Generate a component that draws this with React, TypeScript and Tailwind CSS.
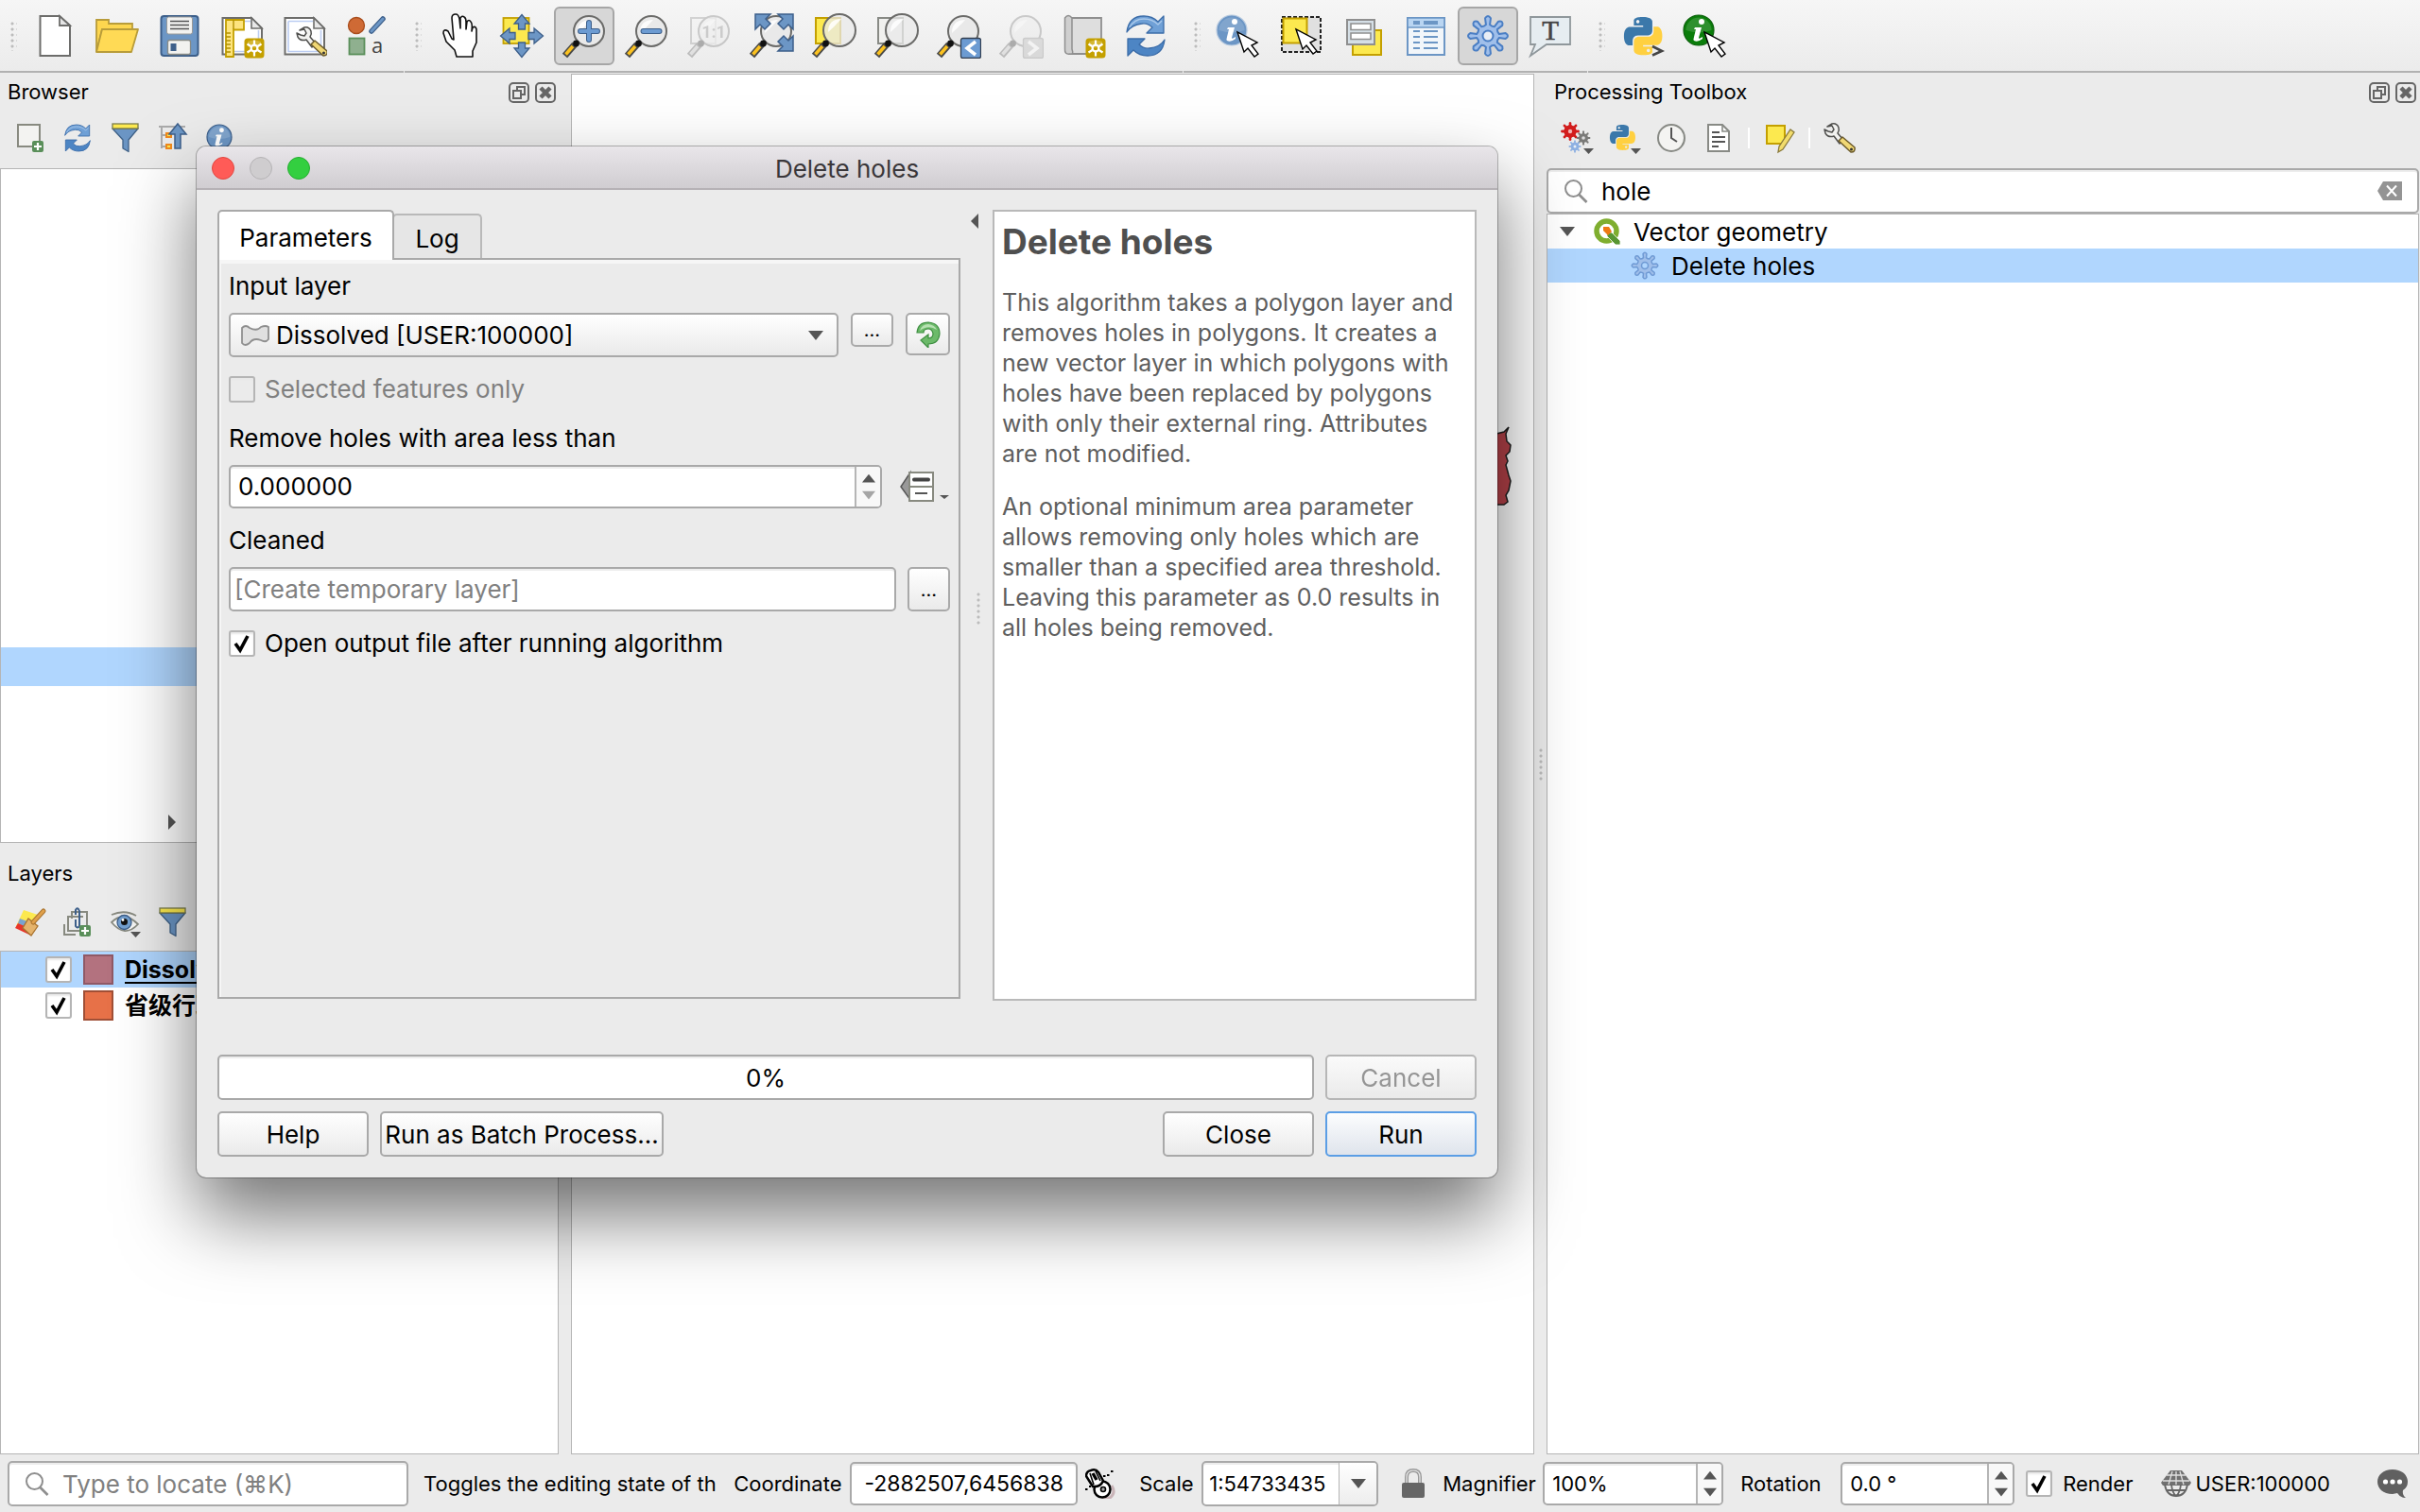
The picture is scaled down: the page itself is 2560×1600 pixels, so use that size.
import { useState } from 'react';
import type { ReactNode } from 'react';
import clsx from 'clsx';

/* ---------- shared drawing helpers ---------- */

const gearPath = (cx: number, cy: number, outer: number, inner: number, teeth = 8) => {
    const step = (Math.PI * 2) / teeth;
    const at = (r: number, a: number) => `${(cx + r * Math.sin(a)).toFixed(2)} ${(cy - r * Math.cos(a)).toFixed(2)}`;
    let d = '';
    for (let i = 0; i < teeth; i++) {
        const a = i * step;
        d += `${i ? 'L' : 'M'}${at(inner, a - step * 0.22)}`;
        d += `L${at(outer * 0.86, a - step * 0.2)}Q${at(outer * 1.06, a)} ${at(outer * 0.86, a + step * 0.2)}`;
        d += `L${at(inner, a + step * 0.22)}Q${at(inner * 0.88, a + step * 0.5)} ${at(inner, a + step * 0.78)}`;
    }
    return `${d}Z`;
};

const Svg48 = ({ children }: { children: ReactNode }) => (
    <svg viewBox="0 0 48 48" className="size-12" fill="none" aria-hidden="true">{children}</svg>
);

const Svg32 = ({ children }: { children: ReactNode }) => (
    <svg viewBox="0 0 32 32" className="size-8 overflow-visible" fill="none" aria-hidden="true">{children}</svg>
);

const Lens = ({ cx = 29, cy = 19, r = 16, clear = false }) => (
    <>
        <circle cx={cx} cy={cy} r={r} fill="#e9e9e9" fillOpacity={clear ? 0.75 : 1} stroke="#6b6b69" strokeWidth="2" />
        <path d={`M${cx - 12} ${cy + 2}Q${cx - 12} ${cy - 12} ${cx + 2} ${cy - 12}Q${cx - 5} ${cy - 4} ${cx - 12} ${cy + 2}Z`} fill="#fff" opacity="0.85" />
        <path d="M14 33 3.500 45" stroke="#4a4a48" strokeWidth="7" />
        <path d="M12 35 4.500 43.500" stroke="#fcc21f" strokeWidth="3.500" />
        <circle cx="15.500" cy="32" r="3.400" fill="#111" />
    </>
);

const Cursor = ({ x, y }: { x: number; y: number }) => (
    <path transform={`translate(${x} ${y})`} d="M0 0 7 21 11 17 18 26 22 23 15 14 21 11Z" fill="#fff" stroke="#000" strokeWidth="1.400" />
);

const GoldBadge = () => (
    <>
        <rect x="26.500" y="26.500" width="21" height="21" rx="3.500" fill="#c4a000" />
        <path d="M30 30Q37 27 44 30V35Q37 38 30 35Z" fill="#dcc14a" opacity="0.7" />
        <circle cx="37" cy="37" r="3.400" stroke="#fff" strokeWidth="2.200" />
        <path d="M37 28.500V33M37 41v4.500M29.500 32.500l4 2.500M40.500 39l4 2.500M29.500 41.500l4-2.500M40.500 35l4-2.500" stroke="#fff" strokeWidth="2.200" />
    </>
);

const Info = ({ cx, cy, r, fill, edge }: { cx: number; cy: number; r: number; fill: string; edge: string }) => (
    <>
        <circle cx={cx} cy={cy} r={r} fill={fill} stroke={edge} strokeWidth="1.200" />
        <path d={`M${cx - r * 0.85} ${cy}A${r * 0.85} ${r * 0.85} 0 0 1 ${cx + r * 0.85} ${cy}Q${cx} ${cy + r * 0.3} ${cx - r * 0.85} ${cy}Z`} fill="#fff" opacity="0.15" />
        <g transform={`translate(${cx} ${cy}) scale(${r / 16})`}>
            <circle cx="3" cy="-9" r="3" fill="#fff" />
            <path d="M-4-3H3L0 8Q0 10 4 7V9Q-1 13-5 11-6 10-5 7L-3-1H-5Z" fill="#fff" />
        </g>
    </>
);

const PY = 'M14.25.18l.9.2.73.26.59.3.45.32.34.34.25.34.16.33.1.3.04.26.02.2-.01.13V8.500l-.05.63-.13.55-.21.46-.26.38-.3.31-.33.25-.35.19-.35.14-.33.1-.3.07-.26.04-.21.02H8.770l-.69.05-.59.14-.5.22-.41.27-.33.32-.27.35-.2.36-.15.37-.1.35-.07.32-.04.27-.02.21v3.060H3.170l-.21-.03-.28-.07-.32-.12-.35-.18-.36-.26-.36-.36-.35-.46-.32-.59-.28-.73-.21-.88-.14-1.050-.05-1.230.06-1.220.16-1.040.24-.87.32-.71.36-.57.4-.44.42-.33.42-.24.4-.16.36-.1.32-.05.24-.01h.16l.06.01h8.160v-.83H6.180l-.01-2.750-.02-.37.05-.34.11-.31.17-.28.25-.26.31-.23.38-.2.44-.18.51-.15.58-.12.64-.1.71-.06.77-.04.84-.02 1.270.05zm-6.300 1.980l-.23.33-.08.41.08.41.23.34.33.22.41.09.41-.09.33-.22.23-.34.08-.41-.08-.41-.23-.33-.33-.22-.41-.09-.41.09z';

const Snake = ({ transform }: { transform: string }) => (
    <g transform={transform}>
        <path d={PY} fill="#3b78aa" />
        <path d={PY} fill="#ffd040" transform="rotate(180 12 12)" />
    </g>
);

const Wrench = ({ transform }: { transform?: string }) => (
    <g transform={transform}>
        <path d="M3 4 8 1Q13 0 15 5 16 8 14 11L20 18 16 22 10 14Q4 16 1 11L0 7 4 9 8 10 10 7 8 3Z" fill="#f2f2f0" stroke="#50504e" strokeWidth="1.500" strokeLinejoin="round" />
        <path d="M15 19 19 15 32 26Q33 31 28 31Z" fill="#f0d774" stroke="#6b5a2a" strokeWidth="1.500" strokeLinejoin="round" />
        <circle cx="28.500" cy="28" r="1.500" fill="#333" />
    </g>
);

const SYNC = 'M4 20Q6 3 22 3 31 3 37 9L43 3V21H25L31 15Q26 10 20 11 9 12 4 20Z';

const Sync = ({ transform }: { transform?: string }) => (
    <g transform={transform} stroke="#3b6ca8" strokeWidth="1.300" strokeLinejoin="round">
        <path d={SYNC} fill="#6fa0d6" />
        <path d="M7 15Q12 6 22 6 31 6 37 12L41 8" stroke="#a9c8ea" />
        <path d={SYNC} transform="rotate(180 24 24)" fill="#4d85c4" />
    </g>
);

const Page = ({ children }: { children?: ReactNode }) => (
    <>
        <path d="M3.500 5H34L45 16V43.500H3.500Z" fill="#fff" stroke="#6d6d6b" strokeWidth="2" />
        <path d="M7 8.500H33M7 8.500V40.500H41.500V18" stroke="#bccdf2" strokeWidth="1.600" />
        <path d="M34 5V16H45Z" fill="#e8e8e8" stroke="#6d6d6b" strokeWidth="1.600" />
        {children}
    </>
);

const Funnel = () => (
    <Svg32>
        <path d="M3 6H30L20 18V30.500L14 27V18Z" fill="#6b95c4" stroke="#3f6187" strokeWidth="1.300" strokeLinejoin="round" />
        <rect x="3" y="1" width="27" height="5" fill="#fce94f" stroke="#7b7d4a" strokeWidth="1.300" />
    </Svg32>
);

const Glass = ({ className }: { className?: string }) => (
    <svg viewBox="0 0 26 26" className={clsx('size-[26px] shrink-0', className)} fill="none" aria-hidden="true">
        <circle cx="10.500" cy="10.500" r="8.500" stroke="#8e8e8e" strokeWidth="2" />
        <path d="M16.500 17 24.500 25" stroke="#8e8e8e" strokeWidth="2.600" />
    </svg>
);

const Tri = ({ dir, className }: { dir: 'up' | 'down' | 'left' | 'right'; className?: string }) => {
    const d = { up: 'M8 3 16 13H0Z', down: 'M0 3H16L8 13Z', left: 'M12 0V16L4 8Z', right: 'M4 0V16L12 8Z' }[dir];
    return <svg viewBox="0 0 16 16" className={clsx('size-4 shrink-0 fill-[#555]', className)} aria-hidden="true"><path d={d} /></svg>;
};

/* ---------- main toolbar ---------- */

type Tool = { name: string; icon: ReactNode; on?: boolean; disabled?: boolean };

const fileTools: Tool[] = [
    { name: 'New project', icon: <Svg48><path d="M8.500 3H29L40 13V45H8.500Z" fill="#fff" stroke="#6d6d6b" strokeWidth="2" /><path d="M29 3V13H40Z" fill="#e6e6e6" stroke="#6d6d6b" strokeWidth="1.800" /></Svg48> },
    { name: 'Open project', icon: <Svg48><path d="M2 41V7H15V11H40V17H8Z" fill="#fdd64f" stroke="#b89c3a" strokeWidth="1.800" /><path d="M8 17H46L39 41H2Z" fill="#ffda55" stroke="#b89c3a" strokeWidth="1.800" strokeLinejoin="round" /></Svg48> },
    {
        name: 'Save project',
        icon: (
            <Svg48>
                <rect x="4.500" y="3" width="39" height="42" rx="3" fill="#6c96c5" stroke="#3d5f8a" strokeWidth="2" />
                <rect x="10.500" y="4" width="27" height="18" rx="2" fill="#f2f2f0" stroke="#9a9a98" />
                <path d="M14 8.500H34M14 12.500H34M14 16.500H34" stroke="#555" strokeWidth="1.500" />
                <rect x="11.500" y="28.500" width="24" height="15" rx="2" fill="#f2f2f0" stroke="#888a85" strokeWidth="1.300" />
                <rect x="14.500" y="32" width="6" height="8" fill="#3d5f8a" />
            </Svg48>
        ),
    },
    {
        name: 'New print layout',
        icon: (
            <Svg48>
                <Page />
                <path d="M7 7H26V17.500H15V46H7Z" fill="#fde47e" stroke="#c4a000" strokeWidth="1.800" />
                <path d="M15 7V17M7 21h5M7 25h5M7 29h5M7 33h5M7 37h5M7 41h5" stroke="#b08f00" strokeWidth="1.400" />
                <GoldBadge />
            </Svg48>
        ),
    },
    { name: 'Layout manager', icon: <Svg48><Page><Wrench transform="translate(16 14)" /></Page></Svg48> },
    {
        name: 'Style manager',
        icon: (
            <Svg48>
                <circle cx="13" cy="13" r="8.500" fill="#cf6a35" stroke="#a84c1c" strokeWidth="1.300" />
                <path d="M29 19 41 6" stroke="#3d5f8a" strokeWidth="5.500" strokeLinecap="round" />
                <path d="M29 19 41 6" stroke="#6c96c5" strokeWidth="3" strokeLinecap="round" />
                <rect x="5.500" y="26.500" width="16" height="17" fill="#8fb08f" stroke="#5a8f5a" strokeWidth="1.800" />
                <text x="29" y="42" fontSize="22" fontFamily="Open Sans" fill="#444">a</text>
            </Svg48>
        ),
    },
];

const navTools: Tool[] = [
    { name: 'Pan map', icon: <Svg48><path d="M21 46 19 39 10 30 7 21Q7 16 12 19L16 27 18 28 16 5Q16 1 20 1 23 1 24 6L25 16 25 5Q27 2 29 4 31 5 31 9L31 17 32 9Q34 6 36 9 38 11 37 19L38 15Q41 13 42 17L42 31 38 40 38 46Z" fill="#fff" stroke="#111" strokeWidth="1.600" strokeLinejoin="round" /></Svg48> },
    {
        name: 'Pan map to selection',
        icon: (
            <Svg48>
                <rect x="4.500" y="5" width="27" height="27" fill="#fce94f" stroke="#c4a000" strokeWidth="1.800" />
                {[0, 90, 180, 270].map((deg) => (
                    <path key={deg} transform={`rotate(${deg} 24 24)`} d="M24 1.500 32 11H27.500V17H20.500V11H16Z" fill="#6c96c5" stroke="#3d5f8a" strokeWidth="1.300" />
                ))}
            </Svg48>
        ),
    },
    { name: 'Zoom in', on: true, icon: <Svg48><Lens /><path d="M29 10V28M20 19H38" stroke="#3d5f8a" strokeWidth="6" strokeLinecap="round" /><path d="M29 10V28M20 19H38" stroke="#6c9bd2" strokeWidth="4" strokeLinecap="round" /></Svg48> },
    { name: 'Zoom out', icon: <Svg48><Lens /><path d="M20.500 19H37.500" stroke="#3d5f8a" strokeWidth="6" strokeLinecap="round" /><path d="M20.500 19H37.500" stroke="#6c9bd2" strokeWidth="4" strokeLinecap="round" /></Svg48> },
    { name: 'Zoom to native resolution', disabled: true, icon: <Svg48><rect x="5" y="5" width="26" height="27" stroke="#888" strokeWidth="2" /><Lens clear /><text x="29" y="26" textAnchor="middle" fontSize="18" fontWeight="700" fontFamily="Roboto" fill="#777">1:1</text></Svg48> },
    {
        name: 'Zoom full',
        icon: (
            <Svg48>
                <Lens />
                {['translate(7 1)', 'translate(47 1) scale(-1 1)', 'translate(47 40) scale(-1 -1)'].map((t) => (
                    <path key={t} transform={t} d="M0 0H16L11 5 16 10 10 16 5 11 0 16Z" fill="#6c96c5" stroke="#3d5f8a" strokeWidth="1.500" />
                ))}
            </Svg48>
        ),
    },
    { name: 'Zoom to selection', icon: <Svg48><rect x="5" y="5" width="26" height="27" fill="#fce94f" stroke="#c4a000" strokeWidth="2" /><Lens cx={30} cy={18} r={17} clear /></Svg48> },
    { name: 'Zoom to layer', icon: <Svg48><rect x="5" y="5" width="26" height="27" fill="#f0f0ee" stroke="#888a85" strokeWidth="2" /><Lens cx={30} cy={18} r={17} clear /></Svg48> },
    { name: 'Zoom last', icon: <Svg48><Lens /><rect x="26.500" y="26.500" width="21" height="21" rx="2" fill="#6c9bd2" stroke="#333f50" strokeWidth="1.300" /><path d="M42 30 33 37 42 44" stroke="#fff" strokeWidth="3.500" /></Svg48> },
    { name: 'Zoom next', disabled: true, icon: <Svg48><Lens /><rect x="26.500" y="26.500" width="21" height="21" rx="2" fill="#a4adb8" stroke="#777" strokeWidth="1.300" /><path d="M32 30 41 37 32 44" stroke="#fff" strokeWidth="3.500" /></Svg48> },
    { name: 'New map view', icon: <Svg48><path d="M12 5H43V43H9V5Z" fill="#dedede" stroke="#8f8f8f" strokeWidth="1.800" /><path d="M4.500 5Q8 0 12 5V38Q14 44 10 43 4 44 4.500 38Z" fill="#cfcfcf" stroke="#8f8f8f" strokeWidth="1.500" /><GoldBadge /></Svg48> },
    { name: 'Refresh', icon: <Svg48><Sync /></Svg48> },
];

const attributeTools: Tool[] = [
    { name: 'Identify features', icon: <Svg48><Info cx={17} cy={18} r={16} fill="#6c96c5" edge="#b9cbe0" /><Cursor x={23} y={20} /></Svg48> },
    { name: 'Select features', icon: <Svg48><rect x="4" y="4" width="41" height="37" fill="#e0e0e0" stroke="#222" strokeWidth="2" strokeDasharray="4 2" /><rect x="5.500" y="5.500" width="25" height="26" fill="#fce94f" stroke="#c4a000" strokeWidth="2" /><Cursor x={19} y={17} /></Svg48> },
    { name: 'Deselect features', icon: <Svg48><rect x="13" y="18" width="30" height="26" fill="#fce94f" stroke="#c4a000" strokeWidth="2" /><rect x="7" y="7" width="29" height="26" fill="#d5dfe6" stroke="#8f8f8f" strokeWidth="2" /><path d="M11 11H32V17.500H11ZM11 21H32V27.500H11Z" fill="#fff" stroke="#8f8f8f" strokeWidth="1.600" /></Svg48> },
    {
        name: 'Open attribute table',
        icon: (
            <Svg48>
                <rect x="5" y="5" width="39" height="39" fill="#f2f6fa" stroke="#6c96c5" strokeWidth="2" />
                <path d="M5 5H44V15H5Z" fill="#b9d5f2" stroke="#6c96c5" strokeWidth="1.600" />
                <path d="M11 10H18M22 10H37" stroke="#6c96c5" strokeWidth="4" />
                <path d="M11 19H18M11 25H18M11 31H18M11 37H18M22 19H37M22 25H37M22 31H37M22 37H37" stroke="#6c96c5" strokeWidth="2" />
            </Svg48>
        ),
    },
    { name: 'Processing toolbox', on: true, icon: <Svg48><path d={gearPath(24, 24, 22, 12)} fill="#a0bfea" stroke="#4a7ec4" strokeWidth="2" strokeLinejoin="round" /><circle cx="24" cy="24" r="5.500" fill="#e8eef6" stroke="#4a7ec4" strokeWidth="2" /></Svg48> },
    { name: 'Text annotation', icon: <Svg48><path d="M3 4H45V33H20L3 45 8 33H3Z" fill="#e6edf1" stroke="#8f979b" strokeWidth="1.800" /><text x="24" y="28" textAnchor="middle" fontSize="29" fontFamily="Liberation Serif" fill="#444" stroke="#444" strokeWidth="0.600">T</text></Svg48> },
];

const pluginTools: Tool[] = [
    { name: 'Python console', icon: <Svg48><Snake transform="translate(4 4) scale(1.680)" /><path d="M34 35 44 40 34 44.500" stroke="#444" strokeWidth="2.600" /></Svg48> },
    { name: 'Identify plugin', icon: <Svg48><Info cx={17} cy={18} r={16} fill="#0a7d0a" edge="#0b5f0b" /><Cursor x={23} y={20} /></Svg48> },
];

function ToolGroup({ tools, grow }: { tools: Tool[]; grow?: boolean }) {
    return (
        <div className={clsx('flex h-[77px] items-center gap-0.5 border-b-2 border-[#b1b1b1] pr-[7px]', grow ? 'flex-1' : 'mr-px')}>
            <Grip className="mr-1.5 ml-2.5 h-8 w-2" />
            {tools.map((tool) => (
                <button
                    key={tool.name}
                    aria-label={tool.name}
                    disabled={tool.disabled}
                    className={clsx(
                        'flex h-[62px] w-16 items-center justify-center rounded-md',
                        tool.on && 'border-2 border-[#a6a6a6] bg-[#d7d7d7]',
                        tool.disabled && 'opacity-30 grayscale',
                    )}
                >
                    {tool.icon}
                </button>
            ))}
        </div>
    );
}

function Grip({ className }: { className?: string }) {
    return (
        <div className={clsx('bg-[radial-gradient(circle,#bcbcbc_1px,transparent_2px)] bg-[length:6px_6px]', className)} />
    );
}

/* ---------- dock widgets ---------- */

const DockButtons = () => (
    <div className="flex gap-1.5">
        <button aria-label="Float panel">
            <svg viewBox="0 0 22 22" className="size-[22px]" fill="none" stroke="#666" strokeWidth="2"><rect x="1" y="1" width="20" height="20" rx="4" /><path d="M9 9V5H17V13H13M5 9H13V17H5Z" /></svg>
        </button>
        <button aria-label="Close panel">
            <svg viewBox="0 0 22 22" className="size-[22px]" fill="none" stroke="#666"><rect x="1" y="1" width="20" height="20" rx="4" strokeWidth="2" /><path d="M6 6 16 16M16 6 6 16" strokeWidth="4.500" /></svg>
        </button>
    </div>
);

function DockHeader({ title, buttons = true }: { title: string; buttons?: boolean }) {
    return (
        <header className="flex h-10 items-center justify-between pr-[3px] pb-px pl-2">
            <h2 className="text-[22px]">{title}</h2>
            {buttons && <DockButtons />}
        </header>
    );
}

const DockTool = ({ name, children }: { name: string; children: ReactNode }) => (
    <button aria-label={name} className="flex h-12 w-[50px] items-center justify-center">{children}</button>
);

const AddBadge = () => (
    <>
        <rect x="18" y="19" width="12" height="12" rx="2" fill="#5a8f5a" />
        <path d="M24 21V29M20 25H28" stroke="#fff" strokeWidth="2.200" />
    </>
);

const MenuMark = () => <path d="M22 26H33L27.500 32Z" fill="#555" />;

const BROWSER_ROWS = Array.from({ length: 17 }, (_, i) => ({ id: i, selected: i === 12, branch: i === 16 }));

function BrowserDock() {
    return (
        <section className="flex min-h-0 flex-[815] flex-col">
            <DockHeader title="Browser" />
            <div className="flex h-[60px] items-center pb-1 pl-[7px]">
                <DockTool name="Add selected layers"><Svg32><rect x="3" y="2" width="23" height="23" fill="#f3f3f1" stroke="#888a80" strokeWidth="2" /><AddBadge /></Svg32></DockTool>
                <DockTool name="Refresh"><Svg32><Sync transform="scale(.667)" /></Svg32></DockTool>
                <DockTool name="Filter browser"><Funnel /></DockTool>
                <DockTool name="Collapse all">
                    <Svg32>
                        <path d="M2 4H30M5 4V27M5 13H10M5 25H10" stroke="#aaa" strokeWidth="2" />
                        <path d="M10 11H15V15H10ZM10 23H15V27H10Z" fill="#fce94f" stroke="#f08a1c" strokeWidth="2" />
                        <path d="M22 1 31 12H25V27H19V12H13Z" fill="#6c96c5" stroke="#3d5f8a" strokeWidth="1.500" />
                    </Svg32>
                </DockTool>
                <DockTool name="Properties"><Svg32><Info cx={16} cy={15} r={13} fill="#6c96c5" edge="#3d5f8a" /></Svg32></DockTool>
            </div>
            <ul className="min-h-0 flex-1 overflow-hidden border border-[#b5b5b5] bg-white pt-3.5">
                {BROWSER_ROWS.map((row) => (
                    <li key={row.id} className={clsx('flex h-[41px] items-center pl-[173px]', row.selected && 'bg-[#b0d6fe]')}>
                        {row.branch && <Tri dir="right" />}
                    </li>
                ))}
            </ul>
        </section>
    );
}

function Check({ id, checked, disabled, onChange }: { id: string; checked: boolean; disabled?: boolean; onChange?: () => void }) {
    return (
        <span className="grid size-7 shrink-0">
            <input
                id={id}
                type="checkbox"
                checked={checked}
                disabled={disabled}
                onChange={onChange ?? (() => undefined)}
                className="col-start-1 row-start-1 size-7 appearance-none rounded-[3px] border-2 border-[#b5b5b5] bg-white shadow-[inset_0_2px_2px_#e8e8e8] disabled:bg-transparent"
            />
            {checked && (
                <svg viewBox="0 0 28 28" className="pointer-events-none col-start-1 row-start-1 size-7" fill="none" aria-hidden="true">
                    <path d="M7 14 12 21 20 6" stroke="#000" strokeWidth="3.600" />
                </svg>
            )}
        </span>
    );
}

const LAYERS = [
    { id: 'dissolved', name: 'Dissolved', swatch: 'bg-[#b3727f] border-[#8f5966]', active: true },
    { id: 'province', name: '省级行政区', swatch: 'bg-[#e77148] border-[#a04f36]', active: false },
];

function LayersDock() {
    const [visible, setVisible] = useState<Record<string, boolean>>({ dissolved: true, province: true });

    return (
        <section className="flex min-h-0 flex-[634] flex-col pt-[13px]">
            <DockHeader title="Layers" buttons={false} />
            <div className="flex h-[61px] items-center pl-[7px]">
                <DockTool name="Open layer styling">
                    <Svg32>
                        <path d="M1 20 9 3 24 8 16 29Z" fill="#fce94f" />
                        <path d="M5 12 3 17 18 25 21 18Z" fill="#7aa3d0" />
                        <path d="M3 17 0 22 17 30 19 24Z" fill="#e8352b" />
                        <path d="M14 12 24 20 17 30 8 22Z" fill="#e5b36b" stroke="#a8722e" strokeWidth="1.300" />
                        <path d="M19 16 30 4" stroke="#a8722e" strokeWidth="5" strokeLinecap="round" />
                        <path d="M19 16 30 4" stroke="#e0a04a" strokeWidth="3" strokeLinecap="round" />
                    </Svg32>
                </DockTool>
                <DockTool name="Add group">
                    <Svg32>
                        <path d="M10 12V5H26V22M6 21V10H22M2 18V29H14M6 21V25H18" stroke="#888a80" strokeWidth="2" />
                        <path d="M14 13V20Q16 23 18 20V4Q16-1 14 3V8" stroke="#3d5f8a" strokeWidth="2" />
                        <AddBadge />
                    </Svg32>
                </DockTool>
                <DockTool name="Manage map themes">
                    <Svg32>
                        <path d="M2 8Q16 2 28 9" stroke="#888a80" strokeWidth="1.800" />
                        <path d="M2 16Q15 3 30 18 16 33 2 16Z" fill="#f6f6f4" stroke="#888a80" strokeWidth="1.800" />
                        <circle cx="15.500" cy="16" r="7.500" fill="#729fcf" stroke="#3d5f8a" strokeWidth="1.300" />
                        <circle cx="15.500" cy="15.500" r="3.500" fill="#111" />
                        <circle cx="14" cy="13.500" r="1.400" fill="#fff" />
                        <MenuMark />
                    </Svg32>
                </DockTool>
                <DockTool name="Filter legend"><Funnel /></DockTool>
            </div>
            <ul className="flex-1 overflow-hidden border border-[#b5b5b5] bg-white text-[25px] font-bold">
                {LAYERS.map((layer) => (
                    <li key={layer.id} className={clsx('flex h-[38px] items-center pl-[47px]', layer.active && 'bg-[#b0d6fe]')}>
                        <Check
                            id={`layer-${layer.id}`}
                            checked={visible[layer.id]}
                            onChange={() => setVisible((v) => ({ ...v, [layer.id]: !v[layer.id] }))}
                        />
                        <span className={clsx('mr-3 ml-3 size-8 border-2', layer.swatch)} />
                        <label htmlFor={`layer-${layer.id}`} className={clsx('whitespace-nowrap', layer.active && 'underline decoration-2 underline-offset-4')}>
                            {layer.name}
                        </label>
                    </li>
                ))}
            </ul>
        </section>
    );
}

const Divider = () => <span className="mx-1.5 h-[22px] w-0.5 bg-white" />;

function ToolboxDock() {
    const [query, setQuery] = useState('hole');

    return (
        <aside className="flex w-[923px] flex-col">
            <DockHeader title="Processing Toolbox" />
            <div className="flex h-[60px] items-center pb-1 pl-[7px]">
                <DockTool name="Models">
                    <Svg32>
                        <path d={gearPath(9, 9, 10.5, 7)} fill="#d21c1c" />
                        <circle cx="9" cy="9" r="2.200" fill="#f4b4b4" />
                        <path d={gearPath(23, 16, 8, 5.2)} fill="#7a7a78" />
                        <circle cx="23" cy="16" r="1.800" fill="#ddd" />
                        <path d={gearPath(14, 25, 7, 4.6)} fill="#8db0e2" />
                        <circle cx="14" cy="25" r="1.500" fill="#e8eef6" />
                        <path d="M23 27H34L28.500 33Z" fill="#555" />
                    </Svg32>
                </DockTool>
                <DockTool name="Scripts"><Svg32><Snake transform="translate(1 2) scale(1.120)" /><path d="M23 27H34L28.500 33Z" fill="#555" /></Svg32></DockTool>
                <DockTool name="History"><Svg32><circle cx="16" cy="16" r="14" fill="#f4f4f2" stroke="#888a85" strokeWidth="2" /><path d="M16 5V16L22 20" stroke="#555" strokeWidth="2" /></Svg32></DockTool>
                <DockTool name="Results viewer"><Svg32><path d="M5 2H20L27 9V30H5Z" fill="#fff" stroke="#888a85" strokeWidth="2" /><path d="M20 2V9H27" stroke="#888a85" strokeWidth="1.600" /><path d="M9 10H17M9 15H23M9 20H23M9 25H16" stroke="#555" strokeWidth="2" /></Svg32></DockTool>
                <Divider />
                <DockTool name="Edit features in place"><Svg32><path d="M3 3H22V22H3Z" fill="#fce94f" stroke="#c4a000" strokeWidth="2" /><path d="M28 7 32 10 20 28 15 31 16 25Z" fill="#f2dc6c" stroke="#8a7a3a" strokeWidth="1.300" /></Svg32></DockTool>
                <Divider />
                <DockTool name="Options"><Svg32><Wrench /></Svg32></DockTool>
            </div>
            <label className="flex h-12 items-center rounded-[5px] border-2 border-[#a9a9a9] bg-white pr-4 pl-4 shadow-[inset_0_2px_0_#ededed]">
                <Glass />
                <input
                    aria-label="Search algorithms"
                    value={query}
                    onChange={(e) => setQuery(e.target.value)}
                    className="ml-3.5 min-w-0 flex-1 outline-none"
                />
                <button aria-label="Clear search" onClick={() => setQuery('')}>
                    <svg viewBox="0 0 26 20" className="h-5 w-[26px]" fill="none"><path d="M6 0H26V20H6L0 10Z" fill="#949494" /><path d="M10 4.500 20 15.500M20 4.500 10 15.500" stroke="#fff" strokeWidth="2" /></svg>
                </button>
            </label>
            <ul className="flex-1 border border-[#b5b5b5] bg-white">
                <li>
                    <div className="flex h-9 items-center pl-[13px]">
                        <Tri dir="down" />
                        <svg viewBox="0 0 28 28" className="mr-3.5 ml-5 size-7" fill="none" aria-hidden="true">
                            <circle cx="13.500" cy="13.500" r="10.500" stroke="#7fae2f" strokeWidth="5.500" />
                            <path d="M14 15H19L28 24V28H23L14 19Z" fill="#589632" stroke="#fff" strokeWidth="0.800" />
                            <path d="M10 9H16L19 14 15 18 10 13Z" fill="#ee7913" />
                        </svg>
                        Vector geometry
                    </div>
                    <ul>
                        <li className="flex h-9 items-center bg-[#b0d6fe] pl-[87px]">
                            <svg viewBox="0 0 32 32" className="mr-3 size-8" aria-hidden="true">
                                <path d={gearPath(16, 16, 14.5, 8.5)} fill="#a0bfea" stroke="#6f9ad4" strokeWidth="1.500" />
                                <circle cx="16" cy="16" r="3.500" fill="#b0d6fe" stroke="#6f9ad4" strokeWidth="1.500" />
                            </svg>
                            Delete holes
                        </li>
                    </ul>
                </li>
            </ul>
        </aside>
    );
}

function MapCanvas() {
    return (
        <main className="relative min-w-0 flex-1 overflow-hidden border border-[#b5b5b5] bg-white">
            <svg viewBox="0 0 60 84" className="absolute top-[372px] right-[23px] h-[84px] w-[60px]" fill="#b8434a" stroke="#1d1d1d" strokeWidth="1.500" aria-label="Dissolved layer">
                <path d="M0 30 44 8 52 6 57 1 54 8 55 16 59 20 58 27 54 31 56 37 54 41 57 52 59 58 57 68 54 73 56 80 52 83 44 83 0 70Z" />
            </svg>
        </main>
    );
}

/* ---------- form parts ---------- */

const fieldBox = 'rounded-[5px] border-2 border-[#a9a9a9] bg-white shadow-[inset_0_2px_0_#ededed]';
const pushButton = 'rounded-[5px] border-2 border-[#a9a9a9] bg-linear-to-b from-white to-[#eaeaea]';

type SpinProps = { label: string; initial: string; className?: string; minimum?: boolean };

function SpinBox({ label, initial, className, minimum }: SpinProps) {
    const [value, setValue] = useState(initial);

    return (
        <div className={clsx('flex overflow-hidden', fieldBox, className)}>
            <input id={label} value={value} onChange={(e) => setValue(e.target.value)} className="w-0 min-w-0 flex-1 bg-transparent pl-2 outline-none" />
            <div className="flex w-[27px] flex-col items-center justify-center gap-1 border-l-2 border-[#b5b5b5] bg-[#f8f8f8]">
                <button aria-label={`Increase ${label}`}><Tri dir="up" className="h-3.5" /></button>
                <button aria-label={`Decrease ${label}`}><Tri dir="down" className={clsx('h-3.5', minimum && 'opacity-50')} /></button>
            </div>
        </div>
    );
}

/* ---------- algorithm dialog ---------- */

function Titlebar() {
    return (
        <div className="grid h-[46px] grid-cols-[1fr_auto_1fr] items-center rounded-t-[10px] border-b-2 border-[#b5b1b5] bg-linear-to-b from-[#e9e6ea] to-[#d0cdd1] px-4 pt-0.5">
            <div className="flex gap-4">
                <button aria-label="Close window" className="size-6 rounded-full border border-[#e2463f] bg-[#ff5b57]" />
                <button aria-label="Minimize window" disabled className="size-6 rounded-full border border-[#b5b3b5] bg-[#cfcdcf]" />
                <button aria-label="Zoom window" className="size-6 rounded-full border border-[#25ad30] bg-[#33cf40]" />
            </div>
            <h1 className="text-[#3a373a]">Delete holes</h1>
        </div>
    );
}

function Parameters() {
    const [open, setOpen] = useState(true);

    return (
        <div className="flex-1 border-2 border-[#a9a9a9] pt-2.5 pr-[9px] pl-2.5 leading-9 shadow-[inset_2px_4px_0_#f6f6f6]">
            <label htmlFor="input-layer" className="block">Input layer</label>
            <div className="mt-2.5 flex gap-[13px]">
                <div className={clsx('grid flex-1 items-center', pushButton)}>
                    <select id="input-layer" className="col-start-1 row-start-1 h-[43px] w-full appearance-none bg-transparent pl-12 outline-none">
                        <option>Dissolved [USER:100000]</option>
                    </select>
                    <div className="pointer-events-none col-start-1 row-start-1 flex items-center justify-between pr-3.5 pl-2.5">
                        <svg viewBox="0 0 32 24" className="h-6 w-8" aria-hidden="true">
                            <path d="M2 4Q6 0 10 4 18 8 22 3 27 1 30 3V16Q27 20 22 17 14 14 10 20 5 24 2 20Z" fill="#e0e0e0" stroke="#8f8f8f" strokeWidth="1.800" />
                        </svg>
                        <Tri dir="down" />
                    </div>
                </div>
                <button aria-label="Choose layer file" className={clsx('h-9 w-[45px] text-xl leading-5', pushButton)}>…</button>
                <button aria-label="Iterate over this layer" className={clsx('flex h-[45px] w-[47px] items-center justify-center', pushButton)}>
                    <svg viewBox="0 0 28 28" className="size-7" fill="none" aria-hidden="true">
                        <path d="M2 12Q3 1 14 1 26 2 26 13 25 24 14 24V28L6 20 14 14V18Q19 18 19 13 18 8 14 8 9 8 9 12Z" fill="#6cba6a" stroke="#3f8f42" strokeWidth="1.200" />
                        <path d="M5 10Q7 3 14 3 21 4 23 9 14 3 5 10Z" fill="#b5e0b0" />
                    </svg>
                </button>
            </div>
            <div className="mt-5 flex items-center gap-2.5 text-[#808080]">
                <Check id="selected-only" checked={false} disabled />
                <label htmlFor="selected-only" className="leading-7">Selected features only</label>
            </div>
            <label htmlFor="Minimum area" className="mt-5 block">Remove holes with area less than</label>
            <div className="mt-2.5 flex items-center">
                <SpinBox label="Minimum area" initial="0.000000" className="h-[46px] flex-1" minimum />
                <button aria-label="Data defined override" className="flex w-[72px] justify-end">
                    <svg viewBox="0 0 54 36" className="h-9 w-[54px]" fill="none" aria-hidden="true">
                        <path d="M12 3 2 18 12 32Z" fill="#999" stroke="#555" strokeWidth="1.500" />
                        <path d="M11 3H36V18H11ZM11 18H36V33H11Z" fill="#fff" stroke="#888a80" strokeWidth="2" />
                        <path d="M16 10.500H31" stroke="#444" strokeWidth="4" strokeLinecap="round" />
                        <path d="M17 25H30" stroke="#555" strokeWidth="2" />
                        <path d="M43 27H53L48 31Z" fill="#555" />
                    </svg>
                </button>
            </div>
            <label htmlFor="cleaned" className="mt-4 block">Cleaned</label>
            <div className="mt-2.5 flex gap-3">
                <input id="cleaned" placeholder="[Create temporary layer]" className={clsx('h-[47px] min-w-0 flex-1 pl-1 outline-none placeholder:text-[#808080]', fieldBox)} />
                <button aria-label="Choose output" className={clsx('w-[45px] text-xl', pushButton)}>…</button>
            </div>
            <div className="mt-5 flex items-center gap-2.5">
                <Check id="open-output" checked={open} onChange={() => setOpen(!open)} />
                <label htmlFor="open-output" className="leading-7">Open output file after running algorithm</label>
            </div>
        </div>
    );
}

function AlgorithmDialog() {
    return (
        <div role="dialog" aria-label="Delete holes" className="absolute top-[155px] left-[208px] w-[1376px] rounded-[10px] bg-[#ebebeb] shadow-[0_0_0_1px_rgba(0,0,0,0.28),0_40px_80px_rgba(0,0,0,0.55)]">
            <Titlebar />
            <div className="px-[22px] pt-[21px] pb-[22px]">
                <div className="flex h-[837px]">
                    <div className="flex w-[786px] flex-col pb-0.5">
                        <div role="tablist" className="-mb-0.5 flex items-end">
                            <button role="tab" aria-selected="true" className="z-10 h-[53px] w-[187px] rounded-t-[5px] border-2 border-b-0 border-[#a9a9a9] bg-white pt-1">Parameters</button>
                            <button role="tab" aria-selected="false" className="mb-0.5 -ml-0.5 h-[47px] w-[95px] rounded-t-[5px] border-2 border-b-0 border-[#b9b9b9] bg-[#e6e6e6] pt-1">Log</button>
                        </div>
                        <Parameters />
                    </div>
                    <div className="flex w-[34px] flex-col items-center">
                        <button aria-label="Collapse help" className="mt-1 mr-1"><Tri dir="left" /></button>
                        <Grip className="mt-96 ml-1 h-9 w-1.5" />
                    </div>
                    <article className="flex-1 border-2 border-[#b9b9b9] bg-white py-3 pr-4 pl-2 text-[25px] leading-8 text-[#5e5e5e]">
                        <h2 className="text-[37px] leading-10 font-bold text-[#4f4f4f]">Delete holes</h2>
                        <p className="mt-7">
                            This algorithm takes a polygon layer and removes holes in polygons. It creates a new vector layer in which polygons
                            with holes have been replaced by polygons with only their external ring. Attributes are not modified.
                        </p>
                        <p className="mt-6">
                            An optional minimum area parameter allows removing only holes which are smaller than a specified area threshold.
                            Leaving this parameter as 0.0 results in all holes being removed.
                        </p>
                    </article>
                </div>
                <div className="mt-[57px] flex gap-3">
                    <div role="progressbar" aria-valuenow={0} className={clsx('flex h-12 flex-1 items-center justify-center', fieldBox)}>0%</div>
                    <button disabled className={clsx('w-40 text-[#808080] opacity-80', pushButton)}>Cancel</button>
                </div>
                <div className="mt-3 flex h-12 gap-3">
                    <button className={clsx('w-40', pushButton)}>Help</button>
                    <button className={clsx('w-[300px] whitespace-nowrap', pushButton)}>Run as Batch Process…</button>
                    <button className={clsx('ml-auto w-40', pushButton)}>Close</button>
                    <button className="w-40 rounded-[5px] border-2 border-[#5b9ee5] bg-linear-to-b from-[#fcfdfe] to-[#dfe4ec]">Run</button>
                </div>
            </div>
        </div>
    );
}

/* ---------- status bar ---------- */

function StatusBar() {
    const [render, setRender] = useState(true);

    return (
        <footer className="flex h-[61px] items-center pt-px pr-3 pl-2 text-[22px]">
            <label className={clsx('flex h-12 w-[424px] shrink-0 items-center pl-4', fieldBox)}>
                <Glass />
                <input aria-label="Locator" placeholder="Type to locate (⌘K)" className="ml-3.5 min-w-0 flex-1 text-[26px] outline-none placeholder:text-[#808080]" />
            </label>
            <p className="mr-3 ml-4 w-0 flex-1 overflow-hidden whitespace-nowrap">Toggles the editing state of th</p>
            <label htmlFor="coordinate" className="w-[123px]">Coordinate</label>
            <input id="coordinate" defaultValue="-2882507,6456838" className={clsx('h-[46px] w-[241px] text-center text-[23px] outline-none', fieldBox)} />
            <button aria-label="Toggle extents" className="mx-2">
                <svg viewBox="0 0 32 32" className="size-8" fill="none" aria-hidden="true">
                    <path d="M28 18Q33 26 26 31 22 32 18 31" stroke="#c9b4b8" strokeWidth="3" />
                    <circle cx="18" cy="22" r="8.500" fill="#fff" stroke="#000" strokeWidth="2.500" />
                    <circle cx="19" cy="22" r="2.500" fill="#aaa" stroke="#000" strokeWidth="1.600" />
                    <path d="M1 8Q1 3 6 2 11 0 14 4L19 13Q16 20 8 19Z" fill="#fff" stroke="#000" strokeWidth="2.500" />
                    <path d="M5 5 9 17M11 3 16 13" stroke="#000" strokeWidth="1.600" />
                    <path d="M8 5 12 12" stroke="#000" strokeWidth="3.400" />
                    <path d="M19 8H21.500M23 7H25.500M27 3H29.500M0 22H2.500M4 19H6" stroke="#000" strokeWidth="2.200" />
                </svg>
            </button>
            <label htmlFor="scale" className="ml-[17px] w-[66px]">Scale</label>
            <div className={clsx('flex h-12 w-[187px] overflow-hidden', fieldBox)}>
                <input id="scale" defaultValue="1:54733435" className="w-0 min-w-0 flex-1 bg-transparent pl-1.5 outline-none" />
                <button aria-label="Scale presets" className="flex w-10 items-center justify-center border-l border-[#b5b5b5] bg-linear-to-b from-white to-[#ededed]"><Tri dir="down" /></button>
            </div>
            <button aria-label="Lock scale" className="mr-4 ml-[22px]">
                <svg viewBox="0 0 30 32" className="h-8 w-[30px]" fill="none" aria-hidden="true"><path d="M8 16V9Q8 2 15 2 22 2 22 9V16" stroke="#999" strokeWidth="4" /><path d="M8 16V9Q8 2 15 2 22 2 22 9V16" stroke="#e9e9e9" strokeWidth="1.200" /><rect x="3" y="15" width="24" height="16" rx="2" fill="#666" /></svg>
            </button>
            <label htmlFor="Magnifier" className="w-[106px]">Magnifier</label>
            <SpinBox label="Magnifier" initial="100%" className="h-[46px] w-[191px]" />
            <label htmlFor="Rotation" className="ml-[18px] w-[106px]">Rotation</label>
            <SpinBox label="Rotation" initial="0.0 °" className="h-[46px] w-[184px]" />
            <div className="ml-3 flex items-center gap-[11px]">
                <Check id="render" checked={render} onChange={() => setRender(!render)} />
                <label htmlFor="render">Render</label>
            </div>
            <button className="ml-[30px] flex items-center gap-1">
                <svg viewBox="0 0 32 30" className="h-[30px] w-8" fill="none" stroke="#666" aria-hidden="true">
                    <path d="M10 1H22L32 14 30 17H2L0 14Z" fill="#707070" stroke="none" />
                    <path d="M6 6H26M2 12H30M12 2 8 16M20 2 24 16M16 2V16" stroke="#e0e0e0" strokeWidth="1.300" />
                    <path d="M4 16Q6 28 16 28 26 28 28 16M6 22H26M11 16Q12 25 16 28 20 25 21 16" strokeWidth="1.800" />
                </svg>
                USER:100000
            </button>
            <button aria-label="Messages" className="ml-[49px]">
                <svg viewBox="0 0 34 32" className="h-8 w-[34px]" fill="#606060" aria-hidden="true"><path d="M17 1C7 1 1 7 1 14S7 27 17 27L22 26Q25 31 31 31 27 28 28 23 33 20 33 14C33 7 27 1 17 1Z" /><g fill="#fff"><circle cx="9.500" cy="14" r="2.600" /><circle cx="17" cy="14" r="2.600" /><circle cx="24.500" cy="14" r="2.600" /></g></svg>
            </button>
        </footer>
    );
}

export default function App() {
    return (
        <div className="relative flex min-h-screen flex-col overflow-hidden bg-[#ebebeb] font-['Inter','Noto_Sans_CJK_SC',sans-serif] text-[26px] text-black">
            <div role="toolbar" className="flex bg-linear-to-b from-[#f6f6f6] to-[#ebebeb]">
                <ToolGroup tools={fileTools} />
                <ToolGroup tools={navTools} />
                <ToolGroup tools={attributeTools} />
                <ToolGroup tools={pluginTools} grow />
            </div>
            <div className="flex min-h-0 flex-1 pt-px pr-px">
                <div className="flex w-[591px] flex-col">
                    <BrowserDock />
                    <LayersDock />
                </div>
                <div className="w-[13px]" />
                <MapCanvas />
                <div className="flex w-[13px] items-center justify-center"><Grip className="h-9 w-1.5" /></div>
                <ToolboxDock />
            </div>
            <StatusBar />
            <AlgorithmDialog />
        </div>
    );
}
